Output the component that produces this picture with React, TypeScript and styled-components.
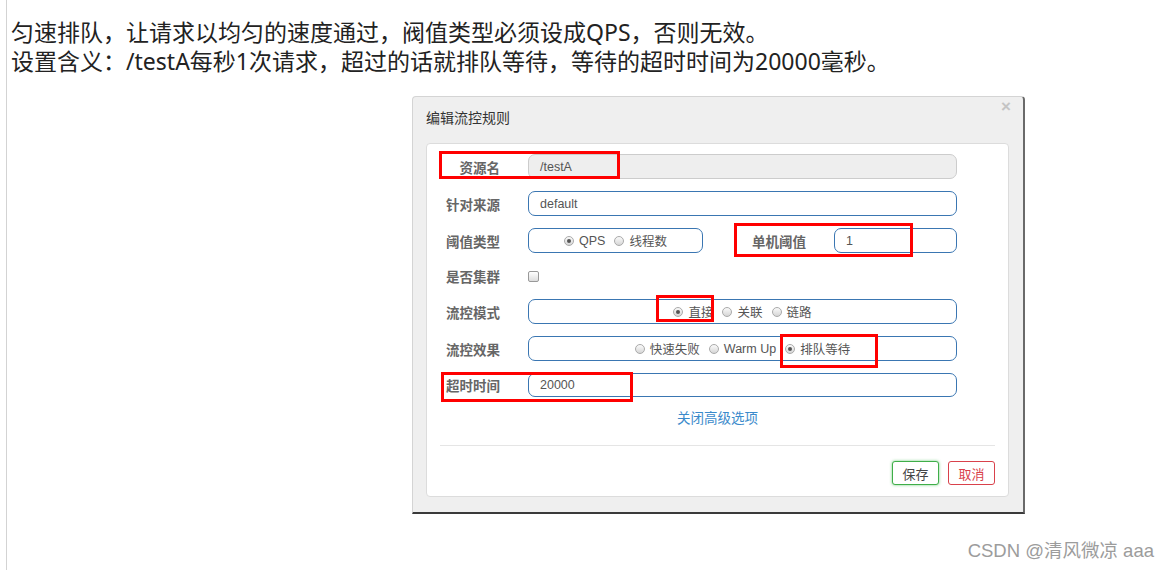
import styled, { createGlobalStyle } from "styled-components";

const GlobalStyle = createGlobalStyle`
  html, body {
    margin: 0;
    padding: 0;
    background: #fff;
  }
  body {
    font-family: "Noto Sans", "Noto Sans CJK SC", sans-serif;
  }
  * {
    box-sizing: border-box;
  }
`;

const Page = styled.div`
  position: relative;
  height: 570px;
  margin-left: 6px;
  border-left: 1px solid #d3d3d3;
  padding: 18px 0 0 4px;
  overflow: hidden;
`;

const Intro = styled.p`
  margin: 0;
  font-size: 23px;
  line-height: 29px;
  color: #222;
`;

const Dialog = styled.div`
  position: relative;
  width: 613px;
  height: 418px;
  margin: 20px 0 0 401px;
  padding: 0 14px 0 13px;
  background: #efefef;
  border: 1px solid #d4d4d4;
  border-right: 2px solid #6a6a6a;
  border-bottom: 2px solid #3a3a3a;
  border-radius: 4px 4px 0 0;
  display: flex;
  flex-direction: column;
  font-family: "Liberation Sans", "Noto Sans CJK SC", sans-serif;
`;

const Header = styled.div`
  height: 46px;
  padding-top: 11px;
  display: flex;
  justify-content: space-between;
  align-items: flex-start;
`;

const Title = styled.div`
  font-size: 14px;
  line-height: 20px;
  color: #333;
`;

const Close = styled.span`
  margin: -9px -2px 0 0;
  font-size: 17px;
  line-height: 16px;
  font-weight: 700;
  color: #c4c4c4;
`;

const Panel = styled.div`
  width: 583px;
  height: 354px;
  padding: 10px 13px 11px;
  background: #fff;
  border: 1px solid #dcdcdc;
  border-radius: 4px;
  display: flex;
  flex-direction: column;
`;

const Rows = styled.div`
  display: flex;
  flex-direction: column;
  gap: 12px;
`;

const Row = styled.div<{ $h?: number }>`
  display: grid;
  grid-template-columns: 60px 1fr;
  column-gap: 28px;
  margin-right: 38px;
  height: ${p => p.$h ?? 25}px;
  align-items: center;
`;

const Label = styled.label`
  text-align: right;
  white-space: nowrap;
  font-family: "Noto Sans CJK SC", sans-serif;
  font-size: 13.5px;
  font-weight: 700;
  color: #666;
`;

const Field = styled.div<{ $disabled?: boolean }>`
  height: 100%;
  display: flex;
  align-items: center;
  padding-left: 11px;
  font-size: 12.5px;
  color: #555;
  background: ${p => (p.$disabled ? "#eee" : "#fff")};
  border: 1px solid ${p => (p.$disabled ? "#ccc" : "#3a76b2")};
  border-radius: 7px;
  flex: 1;
`;

const RadioBox = styled.div<{ $w?: number }>`
  height: 100%;
  ${p => (p.$w ? `width: ${p.$w}px;` : "flex: 1;")}
  display: flex;
  justify-content: center;
  align-items: center;
  gap: 9px;
  border: 1px solid #3a76b2;
  border-radius: 7px;
  font-size: 12.5px;
  color: #555;
`;

const RadioItem = styled.span`
  display: inline-flex;
  align-items: center;
  gap: 5px;
  white-space: nowrap;
`;

const Dot = styled.span<{ $on?: boolean }>`
  position: relative;
  width: 10px;
  height: 10px;
  border-radius: 50%;
  border: 1px solid #aaa;
  background: linear-gradient(#fafafa, #d6d6d6);
  &::after {
    content: "";
    display: ${p => (p.$on ? "block" : "none")};
    position: absolute;
    left: 2px;
    top: 2px;
    width: 4px;
    height: 4px;
    border-radius: 50%;
    background: #555;
  }
`;

const Split = styled.div`
  height: 100%;
  display: flex;
  align-items: center;
`;

const SubLabel = styled(Label)`
  width: 103px;
  margin-right: 28px;
`;

const Check = styled.span`
  width: 11px;
  height: 11px;
  margin-top: 1px;
  border: 1px solid #999;
  border-radius: 2px;
  background: linear-gradient(#fff, #ddd);
`;

const Toggle = styled.div`
  margin-top: 12px;
  text-align: center;
  line-height: 16px;
  font-family: "Noto Sans CJK SC", sans-serif;
  font-size: 13.5px;
  color: #3a8acb;
`;

const Divider = styled.div`
  margin-top: 20px;
  border-top: 1px solid #e5e5e5;
`;

const Actions = styled.div`
  margin-top: 15px;
  display: flex;
  justify-content: flex-end;
  gap: 9px;
`;

const Button = styled.button<{ $tone: "save" | "cancel" }>`
  width: 47px;
  height: 24px;
  padding: 0;
  font-family: "Noto Sans CJK SC", sans-serif;
  font-size: 13px;
  background: #fff;
  border-radius: 3px;
  color: ${p => (p.$tone === "save" ? "#444" : "#d9414b")};
  border: ${p => (p.$tone === "save" ? "1.5px solid #3fae49" : "1px solid #d9414b")};
  box-shadow: ${p => (p.$tone === "save" ? "0 0 3px rgba(76, 190, 90, 0.8)" : "none")};
`;

const Mark = styled.div`
  position: absolute;
  border: 3px solid #f00;
`;

const Watermark = styled.div`
  position: absolute;
  right: 15px;
  bottom: 8px;
  font-family: "Liberation Sans", "Noto Sans CJK SC", sans-serif;
  font-size: 18.5px;
  color: #9c9c9c;
`;

// red annotation frames, offsets measured against the dialog box
const marks = [
  { left: 26, top: 54, width: 181, height: 28 },
  { left: 321, top: 126, width: 179, height: 34 },
  { left: 243, top: 198, width: 58, height: 27 },
  { left: 367, top: 237, width: 98, height: 34 },
  { left: 28, top: 275, width: 192, height: 30 },
];

function Radio({ on, text }: { on?: boolean; text: string }) {
  return (
    <RadioItem>
      <Dot $on={on} />
      {text}
    </RadioItem>
  );
}

function App() {
  return (
    <>
      <GlobalStyle />
      <Page>
        <Intro>
          匀速排队，让请求以均匀的速度通过，阀值类型必须设成QPS，否则无效。
          <br />
          设置含义：/testA每秒1次请求，超过的话就排队等待，等待的超时时间为20000毫秒。
        </Intro>
        <Dialog>
          <Header>
            <Title>编辑流控规则</Title>
            <Close>×</Close>
          </Header>
          <Panel>
            <Rows>
              <Row>
                <Label>资源名</Label>
                <Field $disabled>/testA</Field>
              </Row>
              <Row>
                <Label>针对来源</Label>
                <Field>default</Field>
              </Row>
              <Row>
                <Label>阈值类型</Label>
                <Split>
                  <RadioBox $w={175}>
                    <Radio on text="QPS" />
                    <Radio text="线程数" />
                  </RadioBox>
                  <SubLabel>单机阈值</SubLabel>
                  <Field>1</Field>
                </Split>
              </Row>
              <Row $h={22}>
                <Label>是否集群</Label>
                <Split>
                  <Check />
                </Split>
              </Row>
              <Row>
                <Label>流控模式</Label>
                <RadioBox>
                  <Radio on text="直接" />
                  <Radio text="关联" />
                  <Radio text="链路" />
                </RadioBox>
              </Row>
              <Row>
                <Label>流控效果</Label>
                <RadioBox>
                  <Radio text="快速失败" />
                  <Radio text="Warm Up" />
                  <Radio on text="排队等待" />
                </RadioBox>
              </Row>
              <Row $h={24}>
                <Label>超时时间</Label>
                <Field>20000</Field>
              </Row>
            </Rows>
            <Toggle>关闭高级选项</Toggle>
            <Divider />
            <Actions>
              <Button $tone="save">保存</Button>
              <Button $tone="cancel">取消</Button>
            </Actions>
          </Panel>
          {marks.map((m, i) => (
            <Mark key={i} style={m} />
          ))}
        </Dialog>
        <Watermark>CSDN @清风微凉 aaa</Watermark>
      </Page>
    </>
  );
}

export default App;
